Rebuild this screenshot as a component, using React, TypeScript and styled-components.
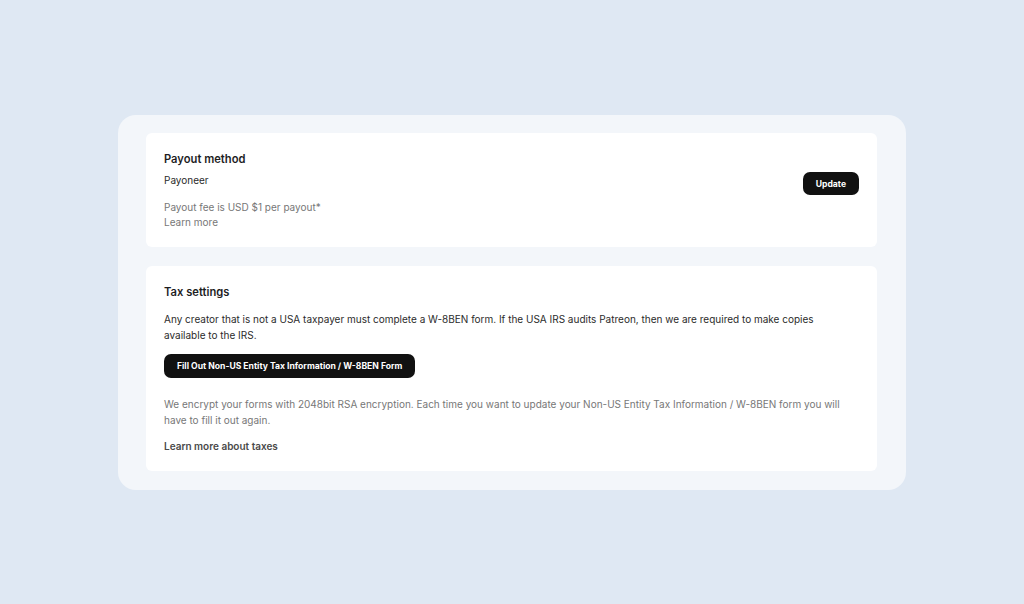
import React from "react";
import styled, { createGlobalStyle } from "styled-components";

const Global = createGlobalStyle`
  html, body { margin: 0; padding: 0; }
  body {
    background: #dfe8f3;
    font-family: Inter, "Noto Sans", "Liberation Sans", sans-serif;
    -webkit-font-smoothing: antialiased;
  }
`;

const Page = styled.div`
  width: 1024px;
  height: 604px;
  display: flex;
  align-items: flex-start;
  justify-content: center;
  padding-top: 115px;
  box-sizing: border-box;
`;

const Panel = styled.div`
  width: 788px;
  box-sizing: border-box;
  background: #f3f6fa;
  border-radius: 18px;
  padding: 18px 29px 19px 28px;
  display: flex;
  flex-direction: column;
  gap: 19px;
`;

const Card = styled.section`
  background: #ffffff;
  border-radius: 6px;
  padding: 18px 18px 17px 18px;
  display: flex;
  align-items: flex-start;
  gap: 16px;
`;

const Body = styled.div`
  flex: 1;
  display: flex;
  flex-direction: column;
`;

const Title = styled.h2`
  margin: 0;
  font-size: 11.2px;
  font-weight: 600;
  color: #1d1d1f;
  line-height: 16px;
`;

const Text = styled.p<{ $muted?: boolean; $mt?: number; $lh?: number }>`
  margin: ${(p) => p.$mt ?? 0}px 0 0 0;
  max-width: 680px;
  font-size: 10px;
  line-height: ${(p) => p.$lh ?? 16}px;
  color: ${(p) => (p.$muted ? "#777777" : "#2b2b2b")};
  font-weight: 400;
`;

const LinkText = styled.a<{ $mt?: number; $bold?: boolean; $lh?: number }>`
  display: block;
  margin-top: ${(p) => p.$mt ?? 0}px;
  font-size: 10px;
  line-height: ${(p) => p.$lh ?? 16}px;
  color: ${(p) => (p.$bold ? "#4a4a4a" : "#777777")};
  font-weight: ${(p) => (p.$bold ? 600 : 400)};
  text-decoration: none;
`;

const Button = styled.button<{ $mt?: number; $h?: number; $px?: number }>`
  align-self: flex-start;
  flex-shrink: 0;
  margin-top: ${(p) => p.$mt ?? 0}px;
  background: #111111;
  color: #ffffff;
  border: none;
  border-radius: 7px;
  font-family: inherit;
  font-size: 8.6px;
  font-weight: 700;
  height: ${(p) => p.$h ?? 24}px;
  padding: 0 ${(p) => p.$px ?? 13}px;
  cursor: pointer;
`;

export default function App() {
  return (
    <>
      <Global />
      <Page>
        <Panel>
          <Card>
            <Body>
              <Title>Payout method</Title>
              <Text $mt={5}>Payoneer</Text>
              <Text $muted $mt={12} $lh={15}>Payout fee is USD $1 per payout*</Text>
              <LinkText href="#" $lh={15}>Learn more</LinkText>
            </Body>
            <Button $mt={21} $h={23} $px={13}>Update</Button>
          </Card>
          <Card>
            <Body>
              <Title>Tax settings</Title>
              <Text $mt={11}>
                Any creator that is not a USA taxpayer must complete a W-8BEN form. If the USA IRS audits Patreon, then we are required to make copies available to the IRS.
              </Text>
              <Button $mt={11}>Fill Out Non-US Entity Tax Information / W-8BEN Form</Button>
              <Text $muted $mt={18}>
                We encrypt your forms with 2048bit RSA encryption. Each time you want to update your Non-US Entity Tax Information / W-8BEN form you will have to fill it out again.
              </Text>
              <LinkText href="#" $bold $mt={10}>Learn more about taxes</LinkText>
            </Body>
          </Card>
        </Panel>
      </Page>
    </>
  );
}
